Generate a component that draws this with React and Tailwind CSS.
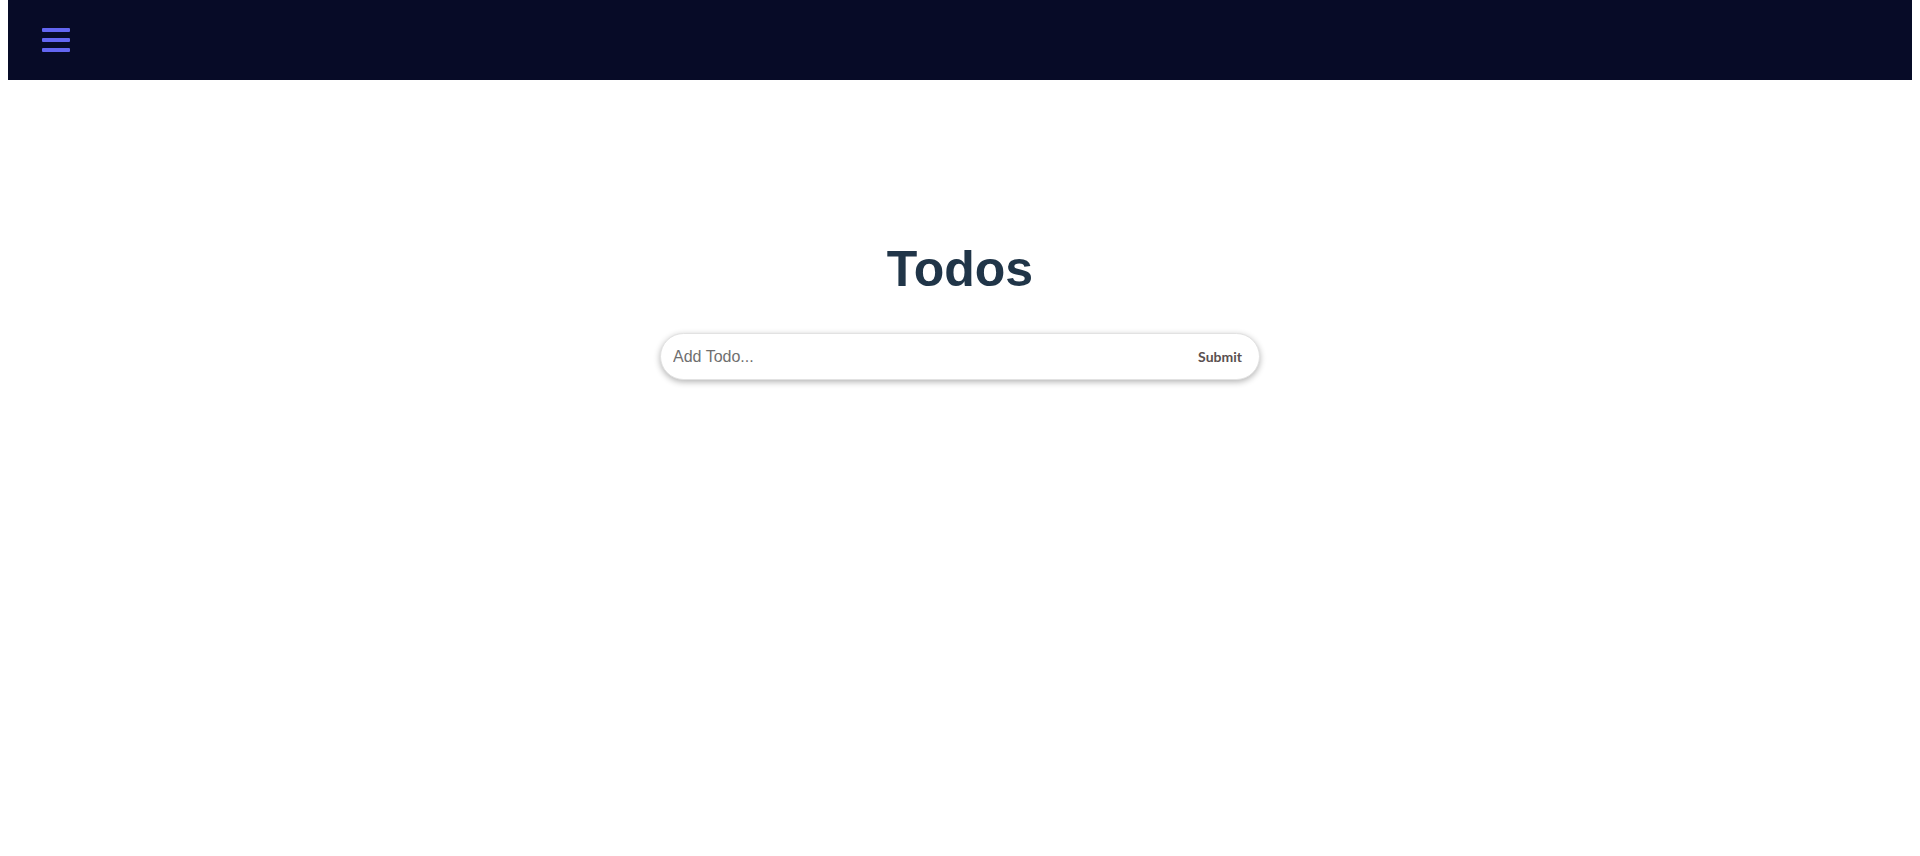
import React, { useState } from 'react';

const App = () => {
  const [todo, setTodo] = useState('');

  return (
    <div className="min-h-screen bg-white font-['Liberation_Sans',Arial,sans-serif]">
      {/* Navbar */}
      <nav className="mx-2 h-20 bg-[#070b27] flex items-center px-[34px]">
        <button className="flex flex-col gap-[6px] cursor-pointer">
          <span className="block w-7 h-1 rounded-[1px] bg-[#6366f1]" />
          <span className="block w-7 h-1 rounded-[1px] bg-[#6366f1]" />
          <span className="block w-7 h-1 rounded-[1px] bg-[#6366f1]" />
        </button>
      </nav>

      {/* Main */}
      <main className="flex flex-col items-center pt-[164px]">
        <h1 className="text-[50px] leading-none font-bold text-[#203548]">Todos</h1>

        <form
          onSubmit={(e) => e.preventDefault()}
          className="mt-[39px] w-[600px] h-[47px] flex items-center rounded-full bg-white border border-[#e2e2e2] shadow-[0_2px_6px_rgba(0,0,0,0.3)] pl-3 pr-[17px]"
        >
          <input
            type="text"
            value={todo}
            onChange={(e) => setTodo(e.target.value)}
            placeholder="Add Todo..."
            className="flex-1 text-base text-gray-700 placeholder:text-[#6f6f6f] outline-none bg-transparent"
          />
          <button
            type="submit"
            className="font-['Lato',sans-serif] font-bold text-[14px] text-[#5a5050] cursor-pointer"
          >
            Submit
          </button>
        </form>
      </main>
    </div>
  );
};

export default App;
